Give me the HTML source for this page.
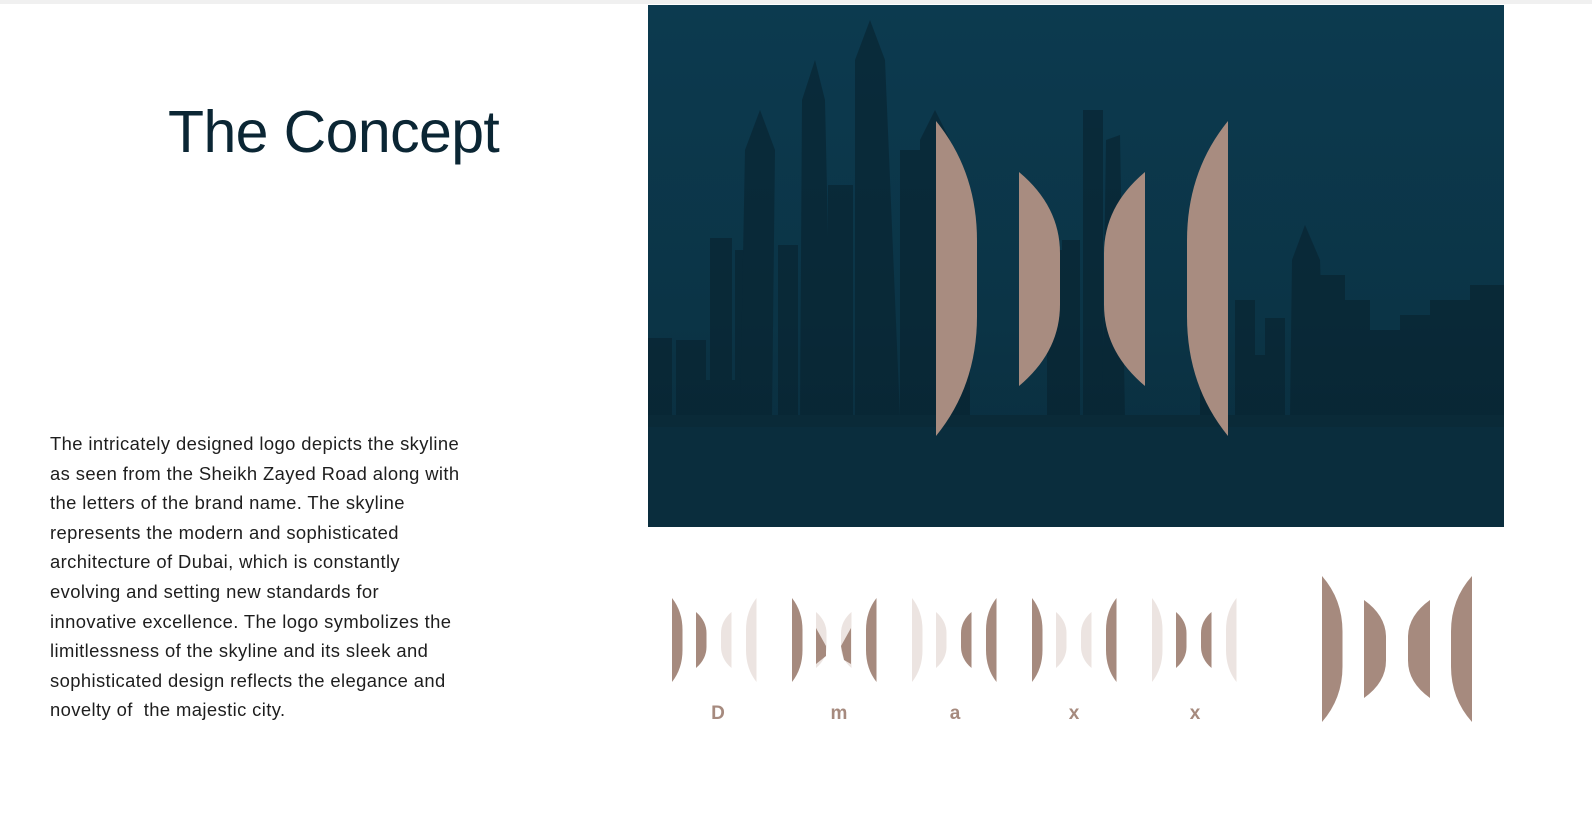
<!DOCTYPE html>
<html><head><meta charset="utf-8"><style>
html,body{margin:0;padding:0;background:#fff;width:1592px;height:820px;overflow:hidden;position:relative;font-family:"Liberation Sans",sans-serif}
.topbar{position:absolute;left:0;top:0;width:1592px;height:4px;background:#f0f0f0}
h1{position:absolute;left:168px;top:92px;margin:0;font-weight:400;font-size:59px;letter-spacing:-0.6px;color:#0b2634;line-height:80px}
.body{position:absolute;left:50px;top:429px;font-size:18.4px;line-height:29.6px;color:#1e1e1e;letter-spacing:0.4px;white-space:nowrap}
svg{position:absolute;left:0;top:0}
</style></head><body>
<div class="topbar"></div>
<h1>The Concept</h1>
<div class="body">The intricately designed logo depicts the skyline<br>as seen from the Sheikh Zayed Road along with<br>the letters of the brand name. The skyline<br>represents the modern and sophisticated<br>architecture of Dubai, which is constantly<br>evolving and setting new standards for<br>innovative excellence. The logo symbolizes the<br>limitlessness of the skyline and its sleek and<br>sophisticated design reflects the elegance and<br>novelty of &nbsp;the majestic city.</div>
<svg width="1592" height="820" viewBox="0 0 1592 820">
<defs>
<linearGradient id="sky" x1="0" y1="0" x2="0" y2="1">
<stop offset="0" stop-color="#0c3a4f"/><stop offset="0.6" stop-color="#0b3446"/><stop offset="1" stop-color="#0a2c3c"/></linearGradient>
<path id="R" d="M0,0 Q10,16 10,38 L10,62 Q10,84 0,100Z"/>
<path id="L" d="M10,0 Q0,16 0,38 L0,62 Q0,84 10,100Z"/>
</defs>
<rect x="648" y="5" width="856" height="522" fill="url(#sky)"/>
<g fill="#08222e" opacity="0.6">
<rect x="648" y="338" width="24" height="80"/>
<rect x="676" y="340" width="30" height="80"/>
<rect x="690" y="380" width="50" height="40"/>
<rect x="710" y="238" width="22" height="180"/>
<rect x="735" y="250" width="14" height="170"/>
<path d="M740,418 L745,150 L760,110 L775,150 L772,418Z"/>
<rect x="778" y="245" width="20" height="175"/>
<path d="M800,418 L802,100 L815,60 L825,100 L832,418Z"/>
<rect x="828" y="185" width="25" height="235"/>
<path d="M855,418 L855,60 L870,20 L885,60 L900,418Z"/>
<rect x="900" y="150" width="20" height="270"/>
<path d="M920,418 L920,140 L935,110 L950,140 L952,418Z"/>
<rect x="950" y="210" width="20" height="210"/>
<rect x="1047" y="250" width="15" height="170"/>
<rect x="1062" y="240" width="18" height="180"/>
<rect x="1083" y="110" width="20" height="310"/>
<path d="M1102,418 L1106,140 L1120,135 L1125,418Z"/>
<rect x="1200" y="180" width="24" height="240"/>
<rect x="1235" y="300" width="20" height="120"/>
<rect x="1252" y="355" width="16" height="65"/>
<rect x="1265" y="318" width="20" height="100"/>
<path d="M1290,418 L1292,260 L1305,225 L1320,260 L1325,418Z"/>
<rect x="1320" y="275" width="25" height="145"/>
<rect x="1345" y="300" width="25" height="120"/>
<rect x="1370" y="330" width="30" height="90"/>
<rect x="1400" y="315" width="30" height="105"/>
<rect x="1430" y="300" width="40" height="120"/>
<rect x="1470" y="285" width="34" height="135"/>
</g>
<rect x="648" y="415" width="856" height="12" fill="#0a2a38"/>
<rect x="648" y="427" width="856" height="100" fill="#0a2d3d"/>
<g fill="#a88c80">
<use href="#R" transform="translate(936,121) scale(4.1,3.15)"/>
<use href="#R" transform="translate(1019,172) scale(4.1,2.14)"/>
<use href="#L" transform="translate(1104,172) scale(4.1,2.14)"/>
<use href="#L" transform="translate(1187,121) scale(4.1,3.15)"/>
</g>
<g>
<g transform="translate(672,0)">
<use href="#R" fill="#a68a7e" transform="translate(0,598) scale(1.05,0.84)"/>
<use href="#R" fill="#a68a7e" transform="translate(24,612) scale(1.05,0.56)"/>
<use href="#L" fill="#ece4e1" transform="translate(49,612) scale(1.05,0.56)"/>
<use href="#L" fill="#ece4e1" transform="translate(74,598) scale(1.05,0.84)"/>
</g>
<g transform="translate(792,0)">
<use href="#R" fill="#a68a7e" transform="translate(0,598) scale(1.05,0.84)"/>
<use href="#R" fill="#ece4e1" transform="translate(24,612) scale(1.05,0.56)"/>
<path d="M24,632 L34,650 L34,660 L24,668Z" fill="#a68a7e" transform="translate(0,-4)"/>
<use href="#L" fill="#ece4e1" transform="translate(49,612) scale(1.05,0.56)"/>
<path d="M59,632 L49,650 L52,664 L59,668Z" fill="#a68a7e" transform="translate(0,-4)"/>
<use href="#L" fill="#a68a7e" transform="translate(74,598) scale(1.05,0.84)"/>
</g>
<g transform="translate(912,0)">
<use href="#R" fill="#ece4e1" transform="translate(0,598) scale(1.05,0.84)"/>
<use href="#R" fill="#ece4e1" transform="translate(24,612) scale(1.05,0.56)"/>
<use href="#L" fill="#a68a7e" transform="translate(49,612) scale(1.05,0.56)"/>
<use href="#L" fill="#a68a7e" transform="translate(74,598) scale(1.05,0.84)"/>
</g>
<g transform="translate(1032,0)">
<use href="#R" fill="#a68a7e" transform="translate(0,598) scale(1.05,0.84)"/>
<use href="#R" fill="#ece4e1" transform="translate(24,612) scale(1.05,0.56)"/>
<use href="#L" fill="#ece4e1" transform="translate(49,612) scale(1.05,0.56)"/>
<use href="#L" fill="#a68a7e" transform="translate(74,598) scale(1.05,0.84)"/>
</g>
<g transform="translate(1152,0)">
<use href="#R" fill="#ece4e1" transform="translate(0,598) scale(1.05,0.84)"/>
<use href="#R" fill="#a68a7e" transform="translate(24,612) scale(1.05,0.56)"/>
<use href="#L" fill="#a68a7e" transform="translate(49,612) scale(1.05,0.56)"/>
<use href="#L" fill="#ece4e1" transform="translate(74,598) scale(1.05,0.84)"/>
</g>
</g>
<g font-family="Liberation Sans, sans-serif" font-weight="700" font-size="19" fill="#a68a7e" text-anchor="middle">
<text x="718" y="719">D</text>
<text x="839" y="719">m</text>
<text x="955" y="719">a</text>
<text x="1074" y="719">x</text>
<text x="1195" y="719">x</text>
</g>
<g fill="#a68a7e">
<use href="#R" transform="translate(1322,576) scale(2.05,1.46)"/>
<use href="#R" transform="translate(1364,600) scale(2.2,0.98)"/>
<use href="#L" transform="translate(1408,600) scale(2.2,0.98)"/>
<use href="#L" transform="translate(1451,576) scale(2.1,1.46)"/>
</g>
</svg>
</body></html>
